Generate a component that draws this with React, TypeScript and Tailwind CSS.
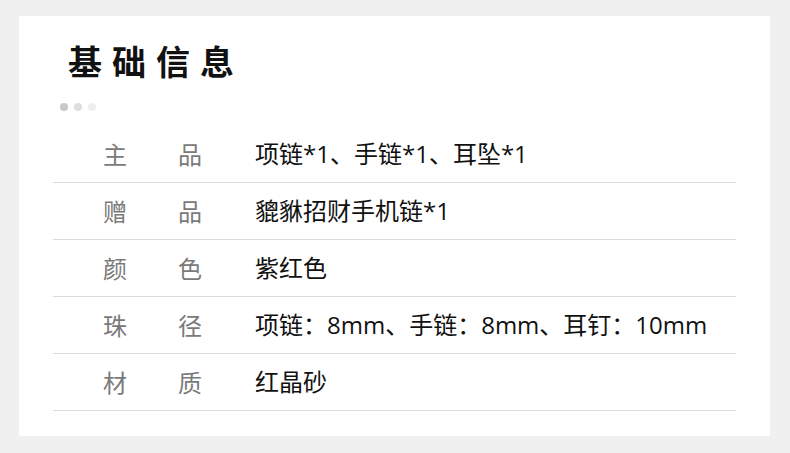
const rows = [
    ["主", "品", "项链*1、手链*1、耳坠*1"],
    ["赠", "品", "貔貅招财手机链*1"],
    ["颜", "色", "紫红色"],
    ["珠", "径", "项链：8mm、手链：8mm、耳钉：10mm"],
    ["材", "质", "红晶砂"],
]

export default function App() {
    return (
        <div
            className="w-[790px] h-[453px] bg-[#f0f0f0] pt-4 pl-[19px]"
            style={{ fontFamily: '"Noto Sans CJK SC", "Noto Sans", sans-serif' }}
        >
            <div className="w-[751px] h-[420px] bg-white pt-[23px]">
                <h1 className="pl-[49px] text-[34px] leading-[44px] font-bold tracking-[10px] text-[#111]">
                    基础信息
                </h1>
                <div className="flex gap-[6px] pl-[41px] mt-[20px]">
                    <span className="w-[8px] h-[8px] rounded-full bg-[#c8c8c8]" />
                    <span className="w-[8px] h-[8px] rounded-full bg-[#dedede]" />
                    <span className="w-[8px] h-[8px] rounded-full bg-[#efefef]" />
                </div>
                <div className="mx-[34px] mt-[15px] w-[683px]">
                    {rows.map((r, i) => (
                        <div
                            key={i}
                            className="flex items-center h-[57px] border-b border-[#dcdcdc] text-[24px]"
                        >
                            <span className="w-[75px] ml-[50px] text-[#7a7a7a]">{r[0]}</span>
                            <span className="w-[77px] text-[#7a7a7a]">{r[1]}</span>
                            <span
                                className="text-[#111]"
                                style={{ fontFamily: '"Open Sans", "Noto Sans CJK SC", sans-serif' }}
                            >
                                {r[2]}
                            </span>
                        </div>
                    ))}
                </div>
            </div>
        </div>
    )
}
